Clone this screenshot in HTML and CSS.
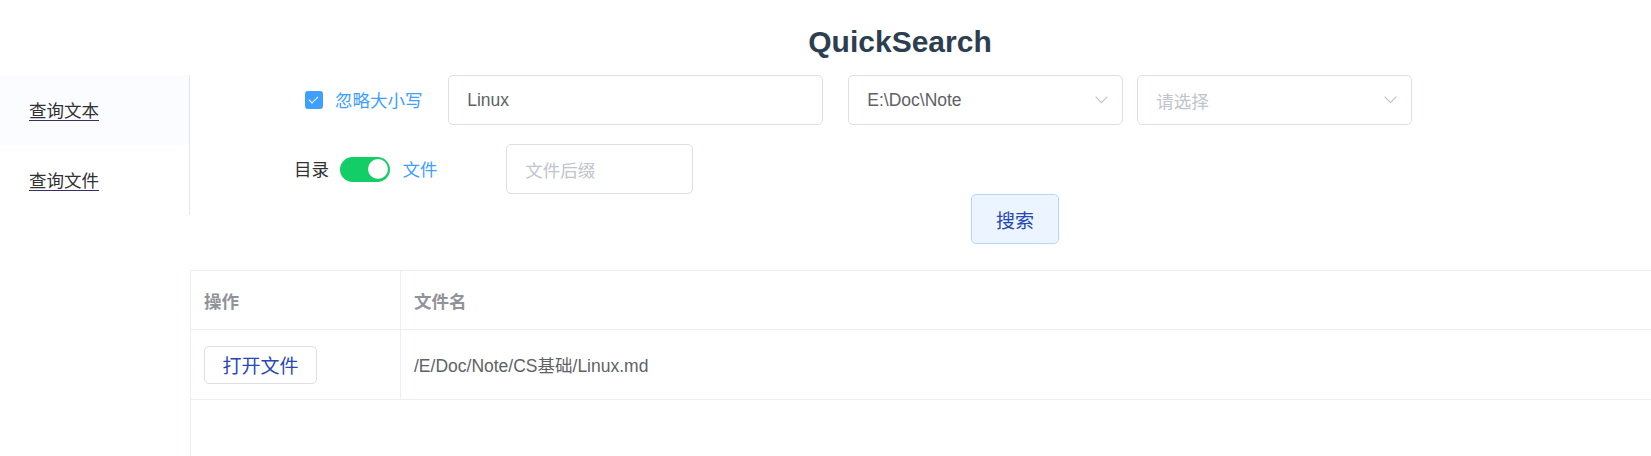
FILE: index.html
```html
<!DOCTYPE html>
<html lang="zh-CN">
<head>
<meta charset="utf-8">
<title>QuickSearch</title>
<link rel="stylesheet" href="styles.css">
</head>
<body>
<header class="title-bar">
  <h2 class="title">QuickSearch</h2>
</header>
<div class="layout">
  <aside class="side-menu">
    <ul class="menu">
      <li class="menu-item is-active"><a class="menu-link" href="#text">查询文本</a></li>
      <li class="menu-item"><a class="menu-link" href="#file">查询文件</a></li>
    </ul>
  </aside>
  <main class="main">
    <div class="form-row row-first">
      <label class="check-field">
        <span class="check-box is-checked"></span>
        <span class="check-label">忽略大小写</span>
      </label>
      <div class="field field-keyword"><span class="field-value">Linux</span></div>
      <div class="field field-select field-dir">
        <span class="field-value">E:\Doc\Note</span>
        <svg class="chevron" width="13" height="8" viewBox="0 0 13 8"><polyline points="0.6,0.6 6.5,6.6 12.4,0.6" fill="none" stroke="#c0c4cc" stroke-width="1.2"/></svg>
      </div>
      <div class="field field-select field-type">
        <span class="field-placeholder">请选择</span>
        <svg class="chevron" width="13" height="8" viewBox="0 0 13 8"><polyline points="0.6,0.6 6.5,6.6 12.4,0.6" fill="none" stroke="#c0c4cc" stroke-width="1.2"/></svg>
      </div>
    </div>
    <div class="form-row row-second">
      <span class="switch-label">目录</span>
      <span class="switch is-on"><span class="switch-knob"></span></span>
      <span class="switch-label is-active">文件</span>
      <div class="field field-suffix"><span class="field-placeholder">文件后缀</span></div>
    </div>
    <div class="action-row">
      <button class="btn btn-search" type="button">搜索</button>
    </div>
    <div class="result-table">
      <table class="table">
        <thead>
          <tr>
            <th class="col-op">操作</th>
            <th class="col-name">文件名</th>
          </tr>
        </thead>
        <tbody>
          <tr>
            <td class="col-op"><button class="btn btn-open" type="button">打开文件</button></td>
            <td class="col-name">/E/Doc/Note/CS基础/Linux.md</td>
          </tr>
        </tbody>
      </table>
    </div>
  </main>
</div>
</body>
</html>
```

FILE: styles.css
```css
html, body {
  margin: 0;
  padding: 0;
  background: #ffffff;
  overflow: hidden;
}

body {
  width: 1651px;
  height: 456px;
  font-family: "Liberation Sans", "Noto Sans CJK SC", sans-serif;
  font-size: 17.5px;
  color: #606266;
}

.title-bar {
  height: 75px;
  box-sizing: border-box;
  padding: 27px 0 0 149px;
  text-align: center;
}

.title {
  margin: 0;
  font-family: "Liberation Sans", "Noto Sans CJK SC", sans-serif;
  font-size: 30px;
  line-height: 30px;
  font-weight: bold;
  color: #2c3e50;
}

.layout {
  display: flex;
  align-items: flex-start;
}

.side-menu {
  width: 190px;
  flex: 0 0 190px;
  box-sizing: border-box;
  border-right: 1px solid #e6e6e6;
}

.menu {
  list-style: none;
  margin: 0;
  padding: 0;
}

.menu-item {
  height: 70px;
  line-height: 70px;
  padding-left: 29px;
}

.menu-item.is-active {
  background: #fafcff;
}

.menu-link {
  font-family: "Noto Sans CJK SC", sans-serif;
  font-size: 17.5px;
  color: #303133;
  text-decoration: underline;
  text-decoration-color: #3a2a66;
  text-underline-offset: 3px;
}

.main {
  flex: 1;
  min-width: 0;
}

.form-row {
  display: flex;
  align-items: center;
  height: 50px;
}

.row-first {
  padding-left: 115px;
}

.row-second {
  margin-top: 19px;
  padding-left: 104px;
}

.check-field {
  display: flex;
  align-items: center;
  gap: 12.5px;
  width: 142.5px;
  flex: 0 0 142.5px;
}

.check-box {
  position: relative;
  width: 17.5px;
  height: 17.5px;
  box-sizing: border-box;
  border-radius: 2.5px;
  border: 1px solid #409eff;
  background: #409eff;
}

.check-box.is-checked::after {
  content: "";
  position: absolute;
  left: 5.3px;
  top: 2px;
  width: 3.6px;
  height: 8px;
  border: 1.3px solid #ffffff;
  border-left: 0;
  border-top: 0;
  transform: rotate(45deg);
}

.check-label {
  font-family: "Noto Sans CJK SC", sans-serif;
  color: #409eff;
  line-height: 1;
}

.field {
  display: flex;
  align-items: center;
  height: 50px;
  box-sizing: border-box;
  border: 1px solid #dcdfe6;
  border-radius: 5px;
  padding: 0 14px 0 18.75px;
  background: #ffffff;
}

.field-value {
  flex: 1;
  color: #606266;
}

.field-placeholder {
  flex: 1;
  font-family: "Noto Sans CJK SC", sans-serif;
  color: #c0c4cc;
}

.field-keyword {
  width: 375px;
}

.field-dir {
  width: 275px;
  margin-left: 25px;
}

.field-type {
  width: 275px;
  margin-left: 14px;
}

.chevron {
  display: block;
  flex: 0 0 auto;
}

.switch-label {
  font-family: "Noto Sans CJK SC", sans-serif;
  color: #303133;
  line-height: 1;
}

.switch-label.is-active {
  color: #409eff;
}

.switch {
  position: relative;
  width: 50px;
  height: 25px;
  border-radius: 12.5px;
  background: #13ce66;
  margin: 0 12.5px 0 11px;
}

.switch-knob {
  position: absolute;
  top: 2.5px;
  right: 2.5px;
  width: 20px;
  height: 20px;
  border-radius: 50%;
  background: #ffffff;
}

.field-suffix {
  width: 187.5px;
  margin-left: 68px;
}

.action-row {
  height: 50px;
  padding-left: 781px;
}

.btn {
  box-sizing: border-box;
  font-family: "Noto Sans CJK SC", sans-serif;
  font-size: 19px;
  line-height: 1;
  color: #2747b5;
  background: #ffffff;
  border: 1px solid #dcdfe6;
  border-radius: 5px;
  cursor: pointer;
}

.btn-search {
  height: 50px;
  width: 88px;
  padding: 0;
  background: #ecf5ff;
  border-color: #b3d8ff;
}

.btn-open {
  height: 38px;
  width: 113px;
  padding: 0;
}

.result-table {
  margin-top: 26px;
  width: 1500px;
  height: 200px;
  border-left: 1px solid #ebeef5;
  border-top: 1px solid #ebeef5;
}

.table {
  width: 100%;
  border-collapse: separate;
  border-spacing: 0;
  table-layout: fixed;
}

.table th,
.table td {
  text-align: left;
  padding: 0 0 0 13px;
  border-bottom: 1px solid #ebeef5;
  box-sizing: border-box;
}

.table th {
  height: 59px;
  font-family: "Noto Sans CJK SC", sans-serif;
  font-weight: bold;
  color: #909399;
  font-size: 17.5px;
}

.table td {
  height: 70px;
  color: #606266;
  font-size: 17.5px;
}

.table .col-op {
  width: 210px;
  border-right: 1px solid #ebeef5;
}
```
